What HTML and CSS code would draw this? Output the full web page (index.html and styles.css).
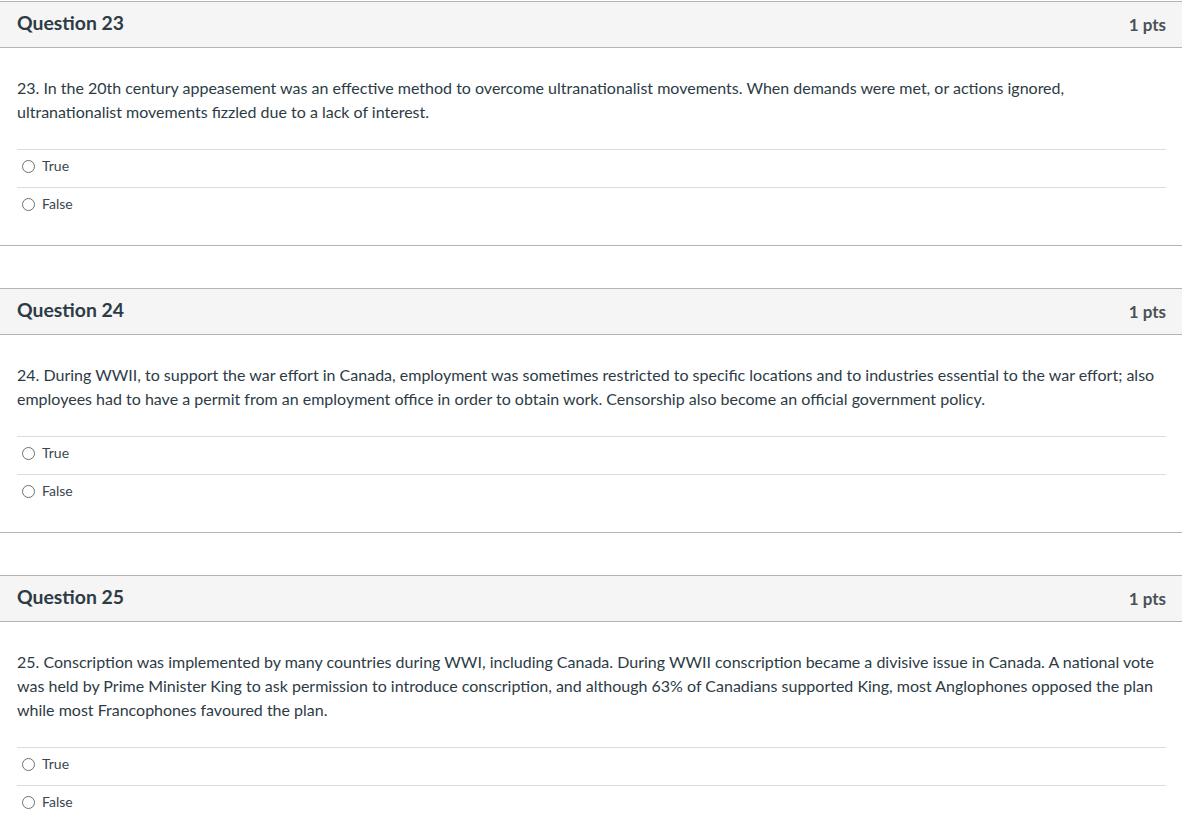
FILE: index.html
```html
<!DOCTYPE html>
<html>
<head>
<meta charset="utf-8">
<link rel="stylesheet" href="styles.css">
</head>
<body>
<div class="quiz">
  <div class="question">
    <div class="q-header">
      <span class="q-title">Question 23</span>
      <span class="q-pts">1 pts</span>
    </div>
    <div class="q-body">
      <p class="q-text">23. In the 20th century appeasement was an effective method to overcome ultranationalist movements. When demands were met, or actions ignored, ultranationalist movements fizzled due to a lack of interest.</p>
      <div class="answers">
        <label class="answer"><span class="radio"></span><span class="lbl">True</span></label>
        <label class="answer"><span class="radio"></span><span class="lbl">False</span></label>
      </div>
    </div>
  </div>
  <div class="question">
    <div class="q-header">
      <span class="q-title">Question 24</span>
      <span class="q-pts">1 pts</span>
    </div>
    <div class="q-body">
      <p class="q-text">24. During WWII, to support the war effort in Canada, employment was sometimes restricted to specific locations and to industries essential to the war effort; also employees had to have a permit from an employment office in order to obtain work. Censorship also become an official government policy.</p>
      <div class="answers">
        <label class="answer"><span class="radio"></span><span class="lbl">True</span></label>
        <label class="answer"><span class="radio"></span><span class="lbl">False</span></label>
      </div>
    </div>
  </div>
  <div class="question">
    <div class="q-header">
      <span class="q-title">Question 25</span>
      <span class="q-pts">1 pts</span>
    </div>
    <div class="q-body">
      <p class="q-text">25. Conscription was implemented by many countries during WWI, including Canada. During WWII conscription became a divisive issue in Canada. A national vote was held by Prime Minister King to ask permission to introduce conscription, and although 63% of Canadians supported King, most Anglophones opposed the plan while most Francophones favoured the plan.</p>
      <div class="answers">
        <label class="answer"><span class="radio"></span><span class="lbl">True</span></label>
        <label class="answer"><span class="radio"></span><span class="lbl">False</span></label>
      </div>
    </div>
  </div>
</div>
</body>
</html>
```
FILE: styles.css
```css
html, body {
  margin: 0;
  padding: 0;
  background: #ffffff;
}
body {
  font-family: Lato, "Open Sans", "Liberation Sans", sans-serif;
  color: #2d3b45;
}
.quiz {
  padding-top: 1px;
  display: flex;
  flex-direction: column;
  gap: 42px;
}
.question {
  border-top: 1px solid #b3b3b3;
  border-bottom: 1px solid #b3b3b3;
}
.q-header {
  height: 45px;
  background: #f5f5f5;
  border-bottom: 1px solid #b3b3b3;
  display: flex;
  align-items: center;
  justify-content: space-between;
  padding: 0 16px 0 17px;
}
.q-title {
  font-size: 19.4px;
  font-weight: 700;
  margin-top: -5px;
}
.q-pts {
  font-size: 17px;
  font-weight: 700;
  color: #4a5157;
  margin-top: -1px;
}
.q-body {
  padding: 28px 16px 20px 17px;
}
.q-text {
  margin: 0 0 25px 0;
  font-size: 16px;
  line-height: 24px;
}
.answers {
  display: flex;
  flex-direction: column;
}
.answer {
  height: 38px;
  border-top: 1px solid #dcdcdc;
  display: flex;
  align-items: center;
  gap: 7px;
  padding-left: 5px;
  padding-bottom: 6px;
  box-sizing: border-box;
  font-size: 14px;
}
.radio {
  width: 11px;
  height: 11px;
  border: 1px solid #6e6e6e;
  border-radius: 50%;
  flex: none;
  margin-top: 2px;
}
.lbl {
  color: #3b4650;
}
```
